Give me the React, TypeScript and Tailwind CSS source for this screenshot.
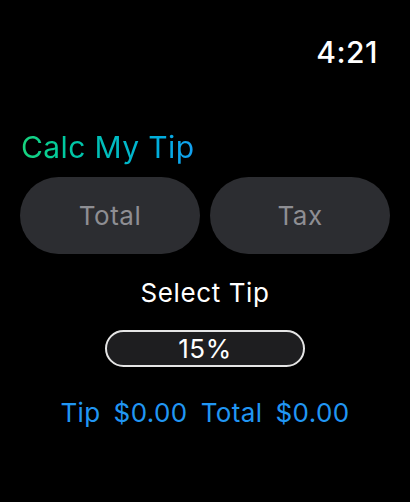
import * as React from 'react'

const inputs = ['Total', 'Tax']

export default function App() {
  return (
    <div
      className="w-[410px] h-[502px] bg-black text-white flex flex-col"
      style={{ fontFamily: 'Inter, "Noto Sans", sans-serif' }}
    >
      {/* status bar */}
      <div className="flex justify-end pt-[34px] pr-[32px]">
        <span className="text-[30px] leading-[36px] font-medium tracking-[0.5px]">
          4:21
        </span>
      </div>

      {/* title */}
      <h1 className="mt-[59px] ml-[21px] text-[30px] leading-[36px] tracking-[0.4px] w-fit bg-gradient-to-r from-[#18d47c] to-[#14a0f2] bg-clip-text text-transparent">
        Calc My Tip
      </h1>

      {/* inputs */}
      <div className="mt-[12px] px-[20px] grid grid-cols-2 gap-[10px]">
        {inputs.map(label => (
          <button
            key={label}
            className="h-[77px] rounded-full bg-[#2c2d31] text-[26px] tracking-[0.5px] text-[#8e8e93]"
          >
            {label}
          </button>
        ))}
      </div>

      <div className="mt-[24px] text-center text-[26px] leading-[30px] tracking-[0.6px]">
        Select Tip
      </div>

      {/* tip picker */}
      <div className="mt-[22px] mx-auto w-[200px] h-[37px] rounded-full border-2 border-[#e5e5e5] bg-[#1e1e20] flex items-center justify-center text-[26px] tracking-[0.5px]">
        15%
      </div>

      <div className="mt-[31px] flex justify-center gap-[13px] text-[26px] leading-[30px] text-[#2196f3] tracking-[0.4px]">
        <span>Tip</span>
        <span>$0.00</span>
        <span>Total</span>
        <span>$0.00</span>
      </div>
    </div>
  )
}
